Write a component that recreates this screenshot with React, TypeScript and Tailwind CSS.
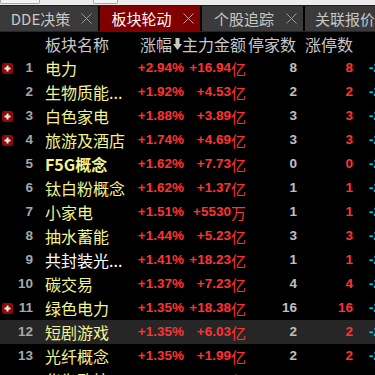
import React from "react";

type Row = {
  n: number;
  name: string;
  chg: string;
  amt: string;
  unit: string;
  cnt: string;
  lim: string;
  flag?: boolean;
  white?: boolean;
  bold?: boolean;
  hl?: boolean;
};

const rows: Row[] = [
  { n: 1, name: "电力", chg: "+2.94%", amt: "+16.94", unit: "亿", cnt: "8", lim: "8", flag: true },
  { n: 2, name: "生物质能...", chg: "+1.92%", amt: "+4.53", unit: "亿", cnt: "2", lim: "2" },
  { n: 3, name: "白色家电", chg: "+1.88%", amt: "+3.89", unit: "亿", cnt: "3", lim: "3", flag: true },
  { n: 4, name: "旅游及酒店", chg: "+1.74%", amt: "+4.69", unit: "亿", cnt: "3", lim: "3", flag: true },
  { n: 5, name: "F5G概念", chg: "+1.62%", amt: "+7.73", unit: "亿", cnt: "0", lim: "0", bold: true },
  { n: 6, name: "钛白粉概念", chg: "+1.62%", amt: "+1.37", unit: "亿", cnt: "1", lim: "1" },
  { n: 7, name: "小家电", chg: "+1.51%", amt: "+5530", unit: "万", cnt: "1", lim: "1" },
  { n: 8, name: "抽水蓄能", chg: "+1.44%", amt: "+5.23", unit: "亿", cnt: "3", lim: "3" },
  { n: 9, name: "共封装光...", chg: "+1.41%", amt: "+18.23", unit: "亿", cnt: "1", lim: "1", white: true },
  { n: 10, name: "碳交易", chg: "+1.37%", amt: "+7.23", unit: "亿", cnt: "4", lim: "4" },
  { n: 11, name: "绿色电力", chg: "+1.35%", amt: "+18.38", unit: "亿", cnt: "16", lim: "16", flag: true },
  { n: 12, name: "短剧游戏", chg: "+1.35%", amt: "+6.03", unit: "亿", cnt: "2", lim: "2", hl: true },
  { n: 13, name: "光纤概念", chg: "+1.35%", amt: "+1.99", unit: "亿", cnt: "2", lim: "2" },
  { n: 14, name: "华为欧拉", chg: "+1.33%", amt: "+2.41", unit: "亿", cnt: "1", lim: "1" },
];

const cjk = { fontFamily: '"Noto Sans CJK SC", "Noto Sans", sans-serif' };
const num = { fontFamily: '"Liberation Sans", Arial, sans-serif' };

const Flag = () => (
  <span className="flex h-[11px] w-[11px] items-center justify-center rounded-[2px] bg-[#8c0a0a]">
    <svg width="7" height="7" viewBox="0 0 7 7">
      <rect x="2.5" y="0.5" width="2" height="6" fill="#f0f0f0" />
      <rect x="0.5" y="2.5" width="6" height="2" fill="#f0f0f0" />
    </svg>
  </span>
);

const Tab = ({ label, active, close = true, w }: { label: string; active?: boolean; close?: boolean; w: string }) => (
  <div
    className={`flex h-full shrink-0 items-center overflow-hidden ${w} ${active ? "bg-[#800000] text-white" : "bg-[#3a3a3a] text-[#c8c8c8]"}`}
  >
    <span className="flex-1 whitespace-nowrap text-center text-[15px] leading-none" style={cjk}>
      {label}
    </span>
    {close && (
      <svg width="11" height="11" viewBox="0 0 11 11" className="mr-[6px] shrink-0">
        <path d="M0.5 0.5L10.5 10.5M10.5 0.5L0.5 10.5" stroke={active ? "#d0a0a0" : "#9a9a9a"} strokeWidth="1" />
      </svg>
    )}
  </div>
);

export default function App() {
  return (
    <div className="h-[375px] w-[375px] overflow-hidden bg-black select-none">
      <div className="relative h-[6px] border-b border-[#202020] bg-[#ececec]">
        <div className="absolute left-0 top-0 h-[4px] w-[40px] rounded-b-[2px] border border-t-0 border-[#a8a8a8] bg-[#f4f4f4]" />
        <div className="absolute left-[93px] top-0 h-[4px] w-[25px] rounded-b-[2px] border border-t-0 border-[#a8a8a8] bg-[#f4f4f4]" />
      </div>
      <div className="flex h-[26px] gap-[2px] border-b border-[#800000] bg-black">
        <Tab label="DDE决策" w="w-[98px]" />
        <Tab label="板块轮动" active w="w-[100px]" />
        <Tab label="个股追踪" w="w-[101px]" />
        <Tab label="关联报价" close={false} w="flex-1 pl-[10px] justify-start" />
      </div>

      <div className="flex h-[24px] items-center whitespace-nowrap text-[16px] leading-none text-[#c8c8c8]" style={cjk}>
        <span className="ml-[45px] w-[95px] shrink-0">板块名称</span>
        <span className="shrink-0">涨幅</span>
        <svg width="9" height="12" viewBox="0 0 9 12" className="ml-[1px] shrink-0">
          <path d="M2.5 0H6.5V6H9L4.5 12L0 6H2.5Z" fill="#c8c8c8" />
        </svg>
        <span className="shrink-0">主力金额</span>
        <span className="ml-[2px] shrink-0">停家数</span>
        <span className="ml-[9px] shrink-0">涨停数</span>
      </div>

      {rows.map((r) => (
        <div key={r.n} className={`flex h-[24px] items-center whitespace-nowrap ${r.hl ? "bg-[#262626]" : ""}`}>
          <div className="flex w-[34px] shrink-0 items-center pl-[2px]">
            <span className="w-[11px]">{r.flag && <Flag />}</span>
            <span className="flex-1 pr-[1px] text-right text-[13.5px] font-bold text-[#a8a8a8]" style={num}>
              {r.n}
            </span>
          </div>
          <span
            className={`ml-[11px] w-[79px] shrink-0 text-[16px] leading-none ${r.white ? "text-white" : "text-[#f4f48c]"} ${r.bold ? "font-bold" : ""}`}
            style={cjk}
          >
            {r.name}
          </span>
          <span className="w-[60px] shrink-0 text-right text-[13.5px] font-bold text-[#ff3333]" style={num}>
            {r.chg}
          </span>
          <span className="flex w-[62px] shrink-0 items-center justify-end text-[#ff3333]">
            <span className="text-[13.5px] font-bold" style={num}>
              {r.amt}
            </span>
            <span className="text-[15px] leading-none" style={cjk}>
              {r.unit}
            </span>
          </span>
          <span className="w-[51px] shrink-0 text-right text-[13.5px] font-bold text-[#c0c0c0]" style={num}>
            {r.cnt}
          </span>
          <span className="w-[56px] shrink-0 text-right text-[13.5px] font-bold text-[#ff3333]" style={num}>
            {r.lim}
          </span>
          <span className="ml-[16px] shrink-0 text-[13.5px] font-bold text-[#00c8dc]" style={num}>
            -2.1
          </span>
        </div>
      ))}
    </div>
  );
}
